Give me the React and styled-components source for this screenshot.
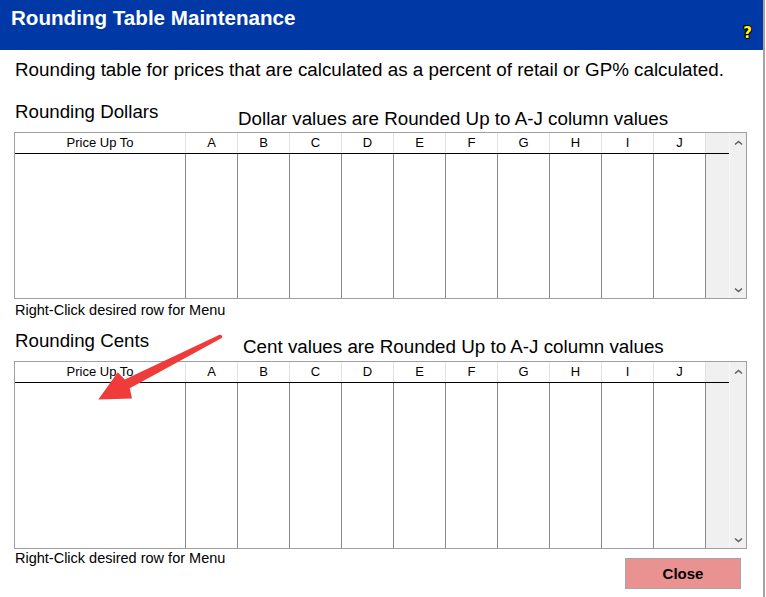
import React from 'react';
import styled, { createGlobalStyle } from 'styled-components';

const GlobalStyle = createGlobalStyle`
    body {
        margin: 0;
        background: #ffffff;
        font-family: "Liberation Sans", Arial, sans-serif;
        color: #000;
    }
`;

const COLUMNS = ['A', 'B', 'C', 'D', 'E', 'F', 'G', 'H', 'I', 'J'];

function Chevron({ down }) {
    return (
        <svg width="9" height="6" viewBox="0 0 9 6">
            <polyline
                points={down ? '1,1.5 4.5,4.5 8,1.5' : '1,4.5 4.5,1.5 8,4.5'}
                fill="none"
                stroke="#606060"
                strokeWidth="1.6"
            />
        </svg>
    );
}

function RoundingGrid({ bodyHeight }) {
    return (
        <Table>
            <GridArea>
                <HeaderRow>
                    <HeadCell>Price Up To</HeadCell>
                    {COLUMNS.map((c) => (
                        <HeadCell key={c}>{c}</HeadCell>
                    ))}
                    <Filler />
                </HeaderRow>
                <BodyRow $height={bodyHeight}>
                    <BodyCell />
                    {COLUMNS.map((c) => (
                        <BodyCell key={c} />
                    ))}
                    <Filler />
                </BodyRow>
            </GridArea>
            <ScrollBar>
                <Chevron />
                <Chevron down />
            </ScrollBar>
        </Table>
    );
}

export default function App() {
    return (
        <>
            <GlobalStyle />
            <Window>
                <TitleBar>
                    <Title>Rounding Table Maintenance</Title>
                    <Help>?</Help>
                </TitleBar>
                <Content>
                    <Description>
                        Rounding table for prices that are calculated as a percent of retail or GP% calculated.
                    </Description>

                    {/* dollars section */}
                    <SectionHead $gap={20}>
                        <Heading $width={223}>Rounding Dollars</Heading>
                        <Subtitle $offset={7}>Dollar values are Rounded Up to A-J column values</Subtitle>
                    </SectionHead>
                    <TableWrap $top={3}>
                        <RoundingGrid bodyHeight={144} />
                    </TableWrap>
                    <Note>Right-Click desired row for Menu</Note>

                    {/* cents section */}
                    <SectionHead $gap={12}>
                        <Heading $width={228}>Rounding Cents</Heading>
                        <Subtitle $offset={6}>Cent values are Rounded Up to A-J column values</Subtitle>
                    </SectionHead>
                    <TableWrap $top={4}>
                        <RoundingGrid bodyHeight={165} />
                    </TableWrap>
                    <Footer>
                        <Note $top={1}>Right-Click desired row for Menu</Note>
                        <CloseButton>Close</CloseButton>
                    </Footer>
                </Content>
                <Annotation width="766" height="597" viewBox="0 0 766 597">
                    <polygon
                        points="98.3,399.5 117.8,372.2 124.8,379.6 220.1,334.4 222.3,336.1 221.8,337.9 129.8,388.3 132,398.4"
                        fill="#ef3b39"
                    />
                </Annotation>
            </Window>
        </>
    );
}

const Window = styled.div`
    position: relative;
    width: 765px;
    height: 597px;
    box-sizing: border-box;
    border-right: 2px solid #a3a3a3;
    overflow: hidden;
    background: #ffffff;
`;

const TitleBar = styled.div`
    height: 50px;
    background: #0039a6;
    display: flex;
    justify-content: space-between;
    align-items: flex-start;
    padding: 0 11px 0 11px;
`;

const Title = styled.h1`
    margin: 6px 0 0 0;
    font-size: 20.6px;
    line-height: 24px;
    font-weight: bold;
    color: #ffffff;
`;

const Help = styled.span`
    align-self: flex-end;
    margin-bottom: 9px;
    font-family: "DejaVu Sans", sans-serif;
    font-size: 15px;
    line-height: 16px;
    font-weight: bold;
    color: #ffff00;
    text-shadow: 1px 0 #000, -1px 0 #000, 0 1px #000, 0 -1px #000, 1px 1px #000, -1px -1px #000;
`;

const Content = styled.div`
    padding: 0 16px 0 14px;
`;

const Description = styled.p`
    margin: 9px 0 0 1px;
    font-size: 18.8px;
    line-height: 22px;
`;

const SectionHead = styled.div`
    display: flex;
    align-items: flex-start;
    margin-top: ${(p) => p.$gap}px;
    padding-left: 1px;
`;

const Heading = styled.h2`
    margin: 0;
    width: ${(p) => p.$width}px;
    font-size: 18.7px;
    line-height: 21px;
    font-weight: normal;
`;

const Subtitle = styled.h3`
    margin: ${(p) => p.$offset}px 0 0 0;
    font-size: 18.8px;
    line-height: 21px;
    font-weight: normal;
`;

const TableWrap = styled.div`
    margin-top: ${(p) => p.$top}px;
`;

const Table = styled.div`
    display: flex;
    width: 733px;
    box-sizing: border-box;
    border: 1px solid #a0a0a0;
    background: #ffffff;
`;

const GridArea = styled.div`
    flex: 1;
    display: flex;
    flex-direction: column;
`;

const HeaderRow = styled.div`
    display: grid;
    grid-template-columns: 171px repeat(10, 52px) 1fr;
    height: 21px;
    box-sizing: border-box;
    border-bottom: 1px solid #000;
`;

const HeadCell = styled.div`
    box-sizing: border-box;
    border-right: 1px solid #e2e2e2;
    font-size: 13px;
    line-height: 20px;
    text-align: center;
    color: #000;
`;

const BodyRow = styled.div`
    display: grid;
    grid-template-columns: 171px repeat(10, 52px) 1fr;
    height: ${(p) => p.$height}px;
`;

const BodyCell = styled.div`
    box-sizing: border-box;
    border-right: 1px solid #8a8a8a;
`;

const Filler = styled.div`
    background: #f0f0f0;
`;

const ScrollBar = styled.div`
    width: 17px;
    box-sizing: border-box;
    border-left: 1px solid #f8f8f8;
    background: #f0f0f0;
    display: flex;
    flex-direction: column;
    justify-content: space-between;
    align-items: center;
    padding: 7px 0 5px 0;
`;

const Note = styled.div`
    margin-top: ${(p) => p.$top ?? 3}px;
    padding-left: 1px;
    font-size: 14.5px;
    line-height: 16px;
`;

const Footer = styled.div`
    display: flex;
    justify-content: space-between;
    align-items: flex-start;
`;

const CloseButton = styled.button`
    margin: 9px 6px 0 0;
    width: 116px;
    height: 31px;
    box-sizing: border-box;
    border: 1px solid #a6a6a6;
    background: #ea9191;
    font-family: "Liberation Sans", Arial, sans-serif;
    font-size: 15px;
    font-weight: bold;
    color: #000;
    padding: 0;
    cursor: pointer;
`;

const Annotation = styled.svg`
    position: absolute;
    left: 0;
    top: 0;
    pointer-events: none;
`;
